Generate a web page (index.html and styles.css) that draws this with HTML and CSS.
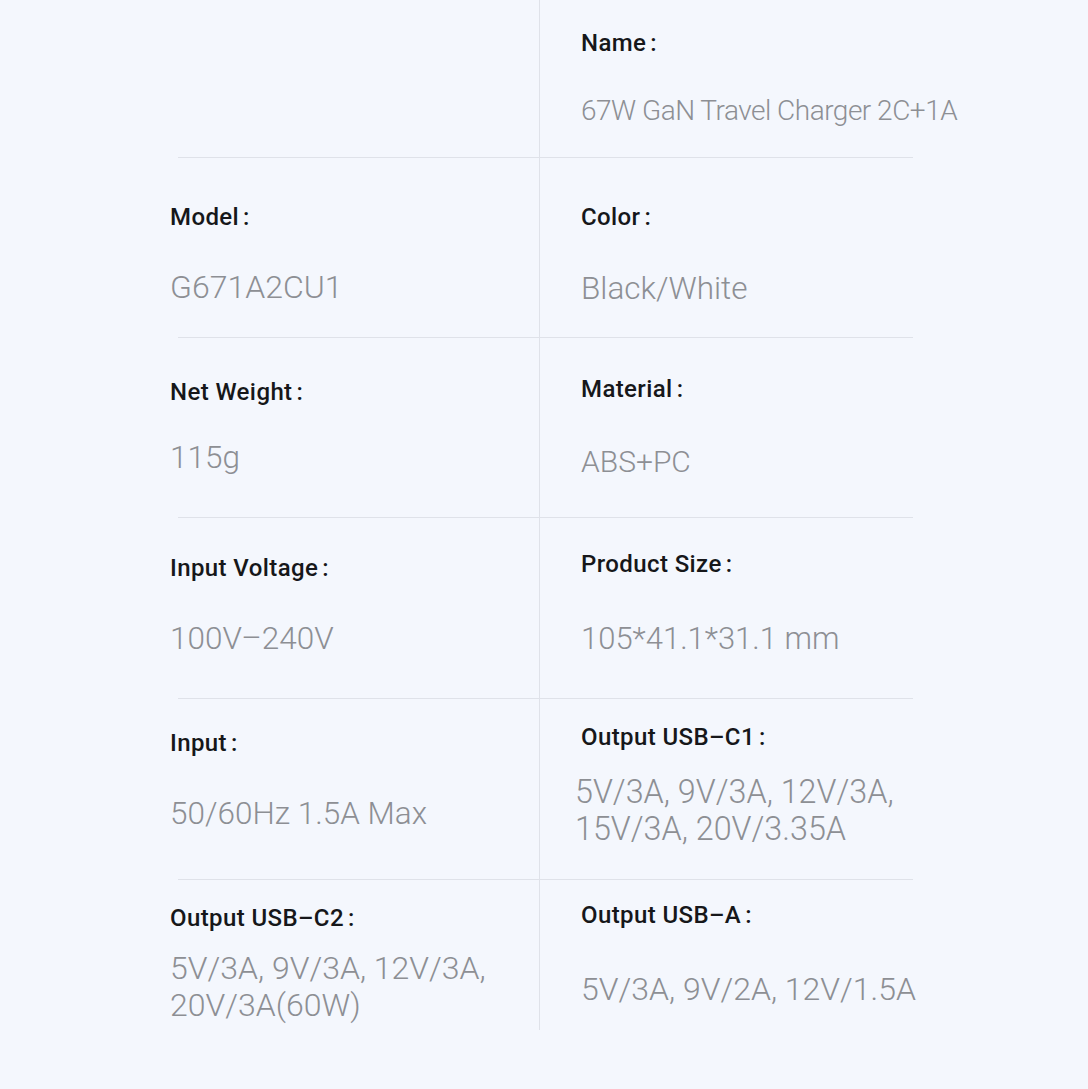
FILE: index.html
```html
<!DOCTYPE html>
<html>
<head>
<meta charset="utf-8">
<link rel="stylesheet" href="styles.css">
</head>
<body>
<div class="specs">
  <div class="row r1">
    <div class="cell left"></div>
    <div class="cell right c-name">
      <div class="label">Name<span class="colon">:</span></div>
      <div class="value">67W GaN Travel Charger 2C+1A</div>
    </div>
  </div>
  <div class="row r2">
    <div class="cell left c-model">
      <div class="label">Model<span class="colon">:</span></div>
      <div class="value">G671A2CU1</div>
    </div>
    <div class="cell right c-color">
      <div class="label">Color<span class="colon">:</span></div>
      <div class="value">Black/White</div>
    </div>
  </div>
  <div class="row r3">
    <div class="cell left c-weight">
      <div class="label">Net Weight<span class="colon">:</span></div>
      <div class="value">115g</div>
    </div>
    <div class="cell right c-material">
      <div class="label">Material<span class="colon">:</span></div>
      <div class="value">ABS+PC</div>
    </div>
  </div>
  <div class="row r4">
    <div class="cell left c-voltage">
      <div class="label">Input Voltage<span class="colon">:</span></div>
      <div class="value">100V–240V</div>
    </div>
    <div class="cell right c-size">
      <div class="label">Product Size<span class="colon">:</span></div>
      <div class="value">105*41.1*31.1 mm</div>
    </div>
  </div>
  <div class="row r5">
    <div class="cell left c-input">
      <div class="label">Input<span class="colon">:</span></div>
      <div class="value">50/60Hz 1.5A Max</div>
    </div>
    <div class="cell right c-c1">
      <div class="label">Output USB–C1<span class="colon">:</span></div>
      <div class="value">5V/3A, 9V/3A, 12V/3A,<br>15V/3A, 20V/3.35A</div>
    </div>
  </div>
  <div class="row r6">
    <div class="cell left c-c2">
      <div class="label">Output USB–C2<span class="colon">:</span></div>
      <div class="value">5V/3A, 9V/3A, 12V/3A,<br>20V/3A(60W)</div>
    </div>
    <div class="cell right c-usba">
      <div class="label">Output USB–A<span class="colon">:</span></div>
      <div class="value">5V/3A, 9V/2A, 12V/1.5A</div>
    </div>
  </div>
</div>
</body>
</html>
```
FILE: styles.css
```css
html, body {
  margin: 0;
  padding: 0;
  background: #f4f7fd;
}
body {
  width: 1088px;
  height: 1089px;
  overflow: hidden;
  font-family: Roboto, "Noto Sans", sans-serif;
}
.specs {
  margin-left: 178px;
  width: 735px;
}
.row {
  display: grid;
  grid-template-columns: 362px 1fr;
  border-bottom: 1.5px solid #dfe2e9;
  box-sizing: border-box;
}
.r1 { height: 158px; }
.r2 { height: 180px; }
.r3 { height: 180px; }
.r4 { height: 181px; }
.r5 { height: 181px; }
.r6 { height: 150px; border-bottom: none; }
.cell {
  display: flex;
  flex-direction: column;
  box-sizing: border-box;
}
.left {
  margin-left: -8px;
  padding-left: 0;
  border-right: 1.5px solid #dfe2e9;
}
.right {
  padding-left: 41px;
}
.label {
  font-size: 24px;
  line-height: 30px;
  font-weight: 500;
  letter-spacing: 0.4px;
  color: #16171a;
  white-space: nowrap;
}
.colon {
  margin-left: 4px;
}
.value {
  font-size: 32px;
  line-height: 37px;
  font-weight: 300;
  color: #8d8f94;
  white-space: nowrap;
}
.c-name { padding-top: 28px; }
.c-name .value { margin-top: 34px; font-size: 28px; letter-spacing: -0.5px; }
.c-model { padding-top: 44px; }
.c-model .value { margin-top: 37px; }
.c-color { padding-top: 44px; }
.c-color .value { margin-top: 38px; font-size: 31.5px; }
.c-weight { padding-top: 39px; }
.c-weight .value { margin-top: 32px; font-size: 31.5px; }
.c-material { padding-top: 36px; }
.c-material .value { margin-top: 39px; font-size: 30px; }
.c-voltage { padding-top: 35px; }
.c-voltage .value { margin-top: 37px; font-size: 31.5px; }
.c-size { padding-top: 31px; }
.c-size .value { margin-top: 41px; font-size: 31px; }
.c-input { padding-top: 29px; }
.c-input .value { margin-top: 37px; font-size: 31.5px; }
.c-c1 { padding-top: 23px; }
.c-c1 .value { margin-top: 22px; margin-left: -6px; font-size: 32.3px; }
.c-c2 { padding-top: 23px; }
.c-c2 .value { margin-top: 17px; }
.c-usba { padding-top: 20px; }
.c-usba .value { margin-top: 41px; }
```
